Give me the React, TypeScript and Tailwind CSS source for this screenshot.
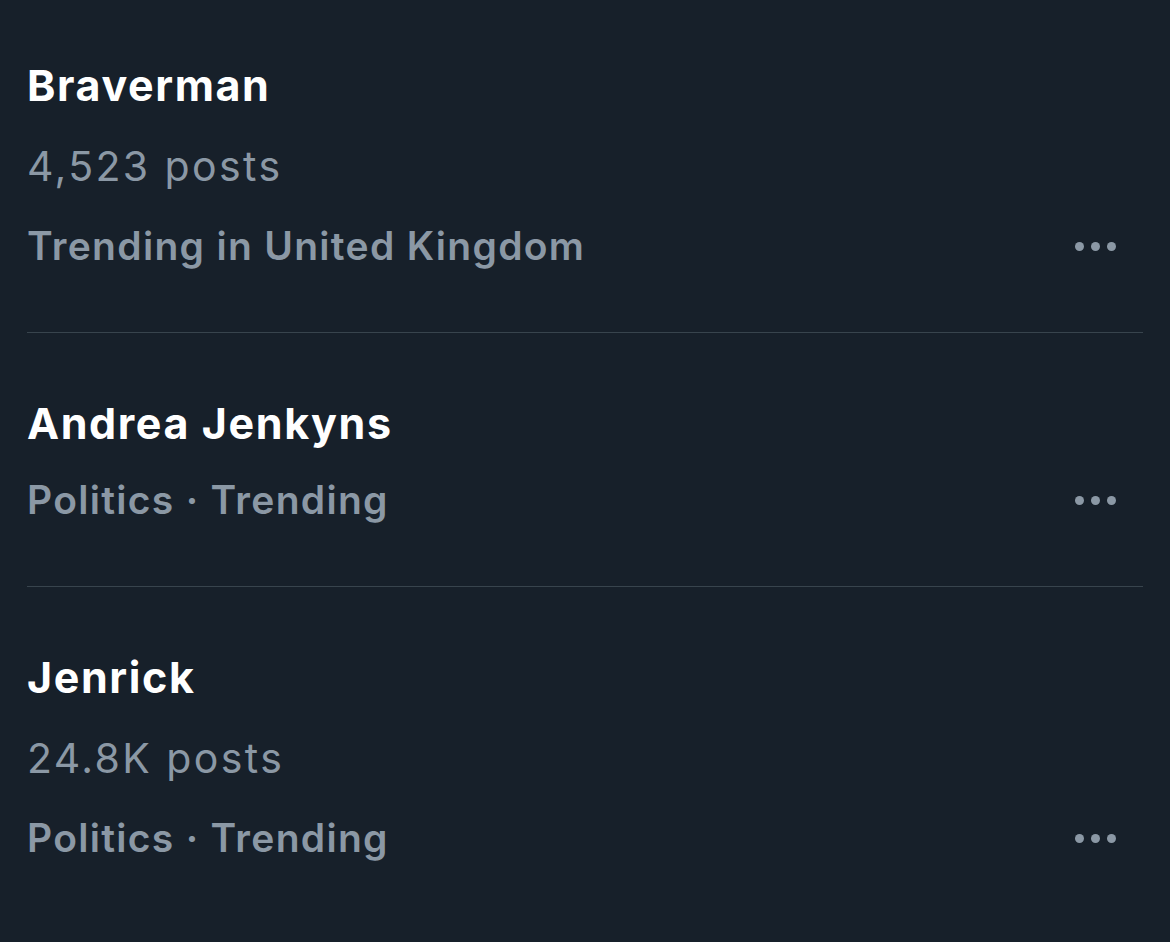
const trends = [
  { name: "Braverman", posts: "4,523 posts", context: "Trending in United Kingdom" },
  { name: "Andrea Jenkyns", posts: null, context: "Politics · Trending" },
  { name: "Jenrick", posts: "24.8K posts", context: "Politics · Trending" },
];

function MoreDots() {
  return (
    <div className="flex items-center gap-[7px] pr-[27px]">
      <span className="h-[9px] w-[9px] rounded-full bg-[#8b98a5]" />
      <span className="h-[9px] w-[9px] rounded-full bg-[#8b98a5]" />
      <span className="h-[9px] w-[9px] rounded-full bg-[#8b98a5]" />
    </div>
  );
}

export default function App() {
  return (
    <div
      className="min-h-[942px] w-full bg-[#17202a] px-[27px] pt-[60px]"
      style={{ fontFamily: "Inter, 'Noto Sans', sans-serif" }}
    >
      {trends.map((t, i) => (
        <div
          key={t.name}
          className={
            i < trends.length - 1
              ? "border-b border-[#38444d] pb-[61px]"
              : "pb-[61px]"
          }
        >
          <div className={i === 0 ? "" : "pt-[65px]"}>
            <div className="h-[50px] text-[43px] leading-[50px] font-bold tracking-[1.6px] text-white">
              {t.name}
            </div>
            {t.posts && (
              <div className="mt-[31px] h-[50px] text-[41px] leading-[50px] font-normal tracking-[2.4px] text-[#8b98a5]">
                {t.posts}
              </div>
            )}
            <div
              className={
                t.posts
                  ? "mt-[30px] flex h-[50px] items-center justify-between"
                  : "mt-[27px] flex h-[50px] items-center justify-between"
              }
            >
              <span className="text-[39px] leading-[50px] font-semibold tracking-[1.3px] text-[#8b98a5]">
                {t.context}
              </span>
              <MoreDots />
            </div>
          </div>
        </div>
      ))}
    </div>
  );
}
